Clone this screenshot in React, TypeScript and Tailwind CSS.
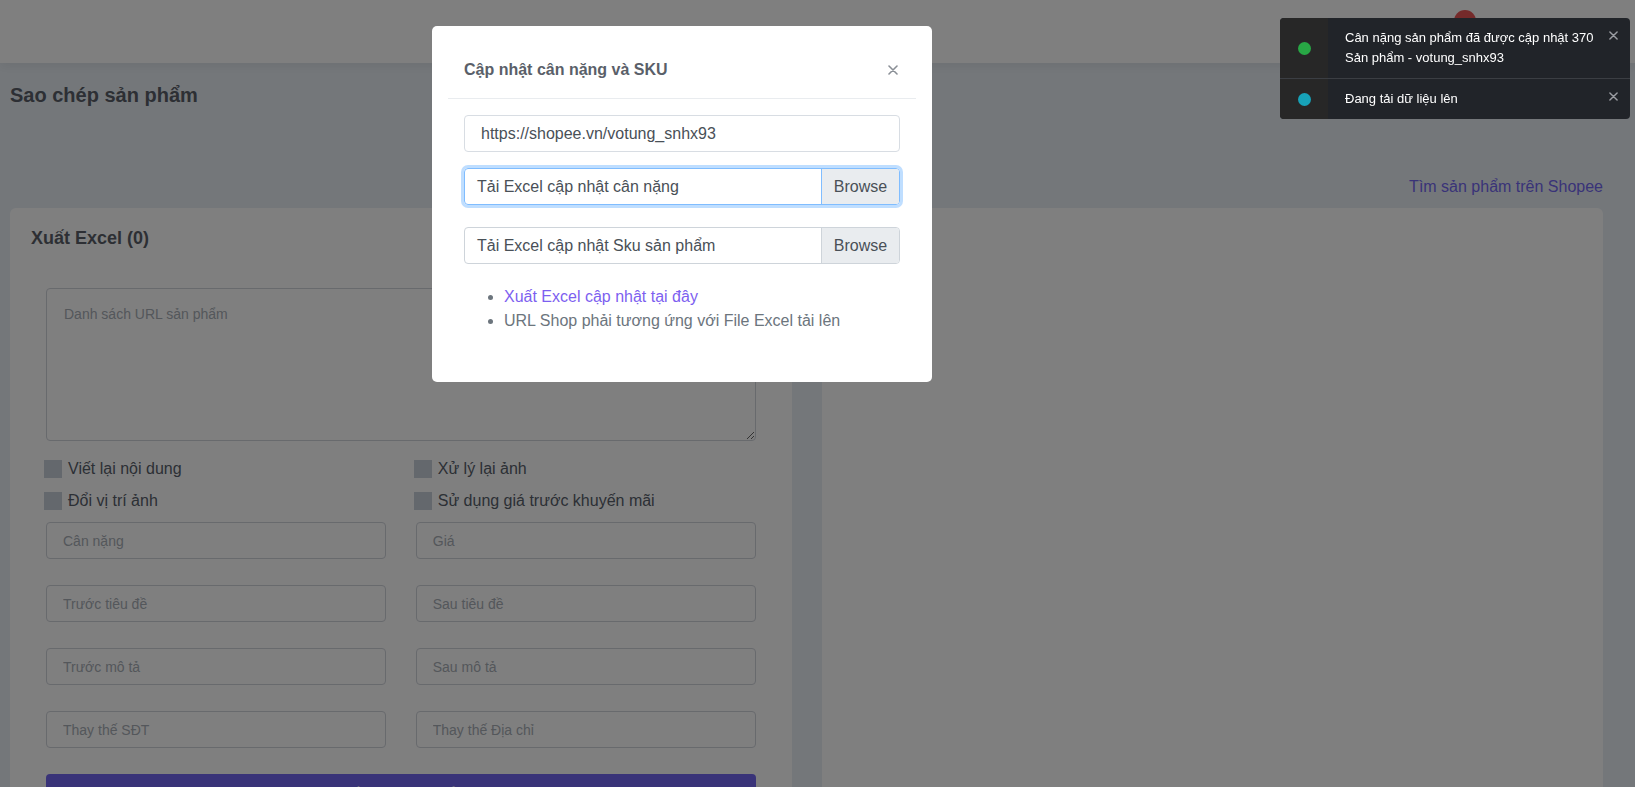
import { useState } from "react";

const FIELDS: [string, string][] = [
  ["Cân nặng", "Giá"],
  ["Trước tiêu đề", "Sau tiêu đề"],
  ["Trước mô tả", "Sau mô tả"],
  ["Thay thế SĐT", "Thay thế Địa chỉ"],
];

const OPTIONS = [
  "Viết lại nội dung",
  "Xử lý lại ảnh",
  "Đổi vị trí ảnh",
  "Sử dụng giá trước khuyến mãi",
];

const TOASTS = [
  { dot: "bg-[#28a745]", text: ["Cân nặng sản phẩm đã được cập nhật 370", "Sản phẩm - votung_snhx93"] },
  { dot: "bg-[#17a2b8]", text: ["Đang tải dữ liệu lên"] },
];

function CloseIcon({ size, className }: { size: number; className: string }) {
  return (
    <svg width={size} height={size} viewBox="0 0 10 10" className={className}>
      <path d="M1 1L9 9M9 1L1 9" stroke="currentColor" strokeWidth="1.6" strokeLinecap="round" />
    </svg>
  );
}

function FileInput({ label, focused }: { label: string; focused?: boolean }) {
  return (
    <div
      className={`flex h-[37px] rounded-[4px] border text-[16px] text-[#495057] ${
        focused
          ? "border-[#80bdff] shadow-[0_0_0_3px_rgba(0,123,255,0.25)]"
          : "border-[#ced4da]"
      }`}
    >
      <div className="flex flex-1 items-center pl-[12px]">{label}</div>
      <div
        className={`flex w-[78px] items-center justify-center rounded-r-[3px] border-l bg-[#e9ecef] ${
          focused ? "border-[#80bdff]" : "border-[#ced4da]"
        }`}
      >
        Browse
      </div>
    </div>
  );
}

export default function App() {
  const [checked] = useState<boolean[]>([false, false, false, false]);

  return (
    <div className="relative h-screen overflow-hidden bg-[#e9eff5] font-['Liberation_Sans',Arial,sans-serif]">
      <header className="flex h-[63px] items-start justify-end bg-white pr-[159px] pt-[10px] shadow-[0_4px_10px_rgba(0,0,0,0.06)]">
        <div className="h-[22px] w-[22px] rounded-full bg-[#ea5455]" />
      </header>

      <main className="pl-[10px] pr-[32px]">
        <h2 className="pt-[20px] text-[20px] font-bold leading-[24px] text-[#5a5f69]">
          Sao chép sản phẩm
        </h2>
        <div className="mt-[68px] flex justify-end">
          <a className="text-[16px] leading-[24px] text-[#7367f0]">Tìm sản phẩm trên Shopee</a>
        </div>

        <div className="mt-[9px] grid grid-cols-2 gap-[30px]">
          <section className="h-[640px] rounded-[6px] bg-white">
            <h3 className="px-[21px] pt-[19px] text-[18px] font-bold leading-[22px] text-[#5a5f69]">
              Xuất Excel (0)
            </h3>
            <div className="mt-[39px] px-[36px]">
              <textarea
                className="block h-[153px] w-full rounded-[4px] border border-[#d0d4da] px-[17px] py-[15px] text-[14px] leading-[20px] outline-none placeholder:text-[#a8aeb6]"
                placeholder="Danh sách URL sản phẩm"
              />

              <div className="mt-[16px] grid grid-cols-2 gap-x-[30px] gap-y-[8px]">
                {OPTIONS.map((opt, i) => (
                  <label key={opt} className="-ml-[2px] flex h-[24px] items-center gap-[6px] text-[16px] text-[#58606b]">
                    <span className={`h-[18px] w-[18px] ${checked[i] ? "bg-[#7367f0]" : "bg-[#c9d1db]"}`} />
                    {opt}
                  </label>
                ))}
              </div>

              <div className="mt-[9px] grid grid-cols-2 gap-x-[30px] gap-y-[26px]">
                {FIELDS.flat().map((ph) => (
                  <input
                    key={ph}
                    className="h-[37px] w-full rounded-[4px] border border-[#d0d4da] px-[16px] text-[14px] outline-none placeholder:text-[#a8aeb6]"
                    placeholder={ph}
                  />
                ))}
              </div>

              <button className="mt-[26px] h-[38px] w-full rounded-[4px] bg-[#7367f0] text-[14px] text-white">
                Xuất Excel sản phẩm
              </button>
            </div>
          </section>
          <section className="h-[640px] rounded-[6px] bg-white" />
        </div>
      </main>

      {/* modal backdrop */}
      <div className="fixed inset-0 bg-black/50" />

      <div className="fixed left-[432px] top-[26px] h-[356px] w-[500px] rounded-[5px] bg-white">
        <div className="mx-[16px] flex items-center justify-between border-b border-[#e9ecef] px-[16px] pb-[18px] pt-[34px]">
          <h5 className="text-[16px] font-bold leading-[20px] text-[#5a5f69]">
            Cập nhật cân nặng và SKU
          </h5>
          <CloseIcon size={10} className="mr-[2px] text-[#8a8f96]" />
        </div>

        <div className="px-[32px] pt-[16px]">
          <input
            className="h-[37px] w-full rounded-[4px] border border-[#d8dde3] px-[16px] text-[16px] text-[#495057] outline-none"
            defaultValue="https://shopee.vn/votung_snhx93"
          />
          <div className="mt-[16px]">
            <FileInput label="Tải Excel cập nhật cân nặng" focused />
          </div>
          <div className="mt-[22px]">
            <FileInput label="Tải Excel cập nhật Sku sản phẩm" />
          </div>
          <ul className="mt-[21px] list-disc pl-[40px] text-[16px] leading-[24px] text-[#6c757d]">
            <li>
              <a className="text-[#7d5ff0]">Xuất Excel cập nhật tại đây</a>
            </li>
            <li>URL Shop phải tương ứng với File Excel tải lên</li>
          </ul>
        </div>
      </div>

      {/* toasts */}
      <div className="fixed right-[5px] top-[18px] w-[350px] overflow-hidden rounded-[4px] bg-[#212429]">
        {TOASTS.map((t, i) => (
          <div key={i} className={`flex ${i > 0 ? "border-t border-[#3b3e43]" : ""}`}>
            <div className="flex w-[48px] items-center justify-center bg-[#272727]">
              <span className={`h-[13px] w-[13px] rounded-full ${t.dot}`} />
            </div>
            <div className="flex-1 py-[10px] pl-[17px] text-[13px] leading-[20px] text-white">
              {t.text.map((line) => (
                <div key={line}>{line}</div>
              ))}
            </div>
            <div className="pr-[12px] pt-[13px]">
              <CloseIcon size={9} className="text-[#9a9da2]" />
            </div>
          </div>
        ))}
      </div>
    </div>
  );
}
